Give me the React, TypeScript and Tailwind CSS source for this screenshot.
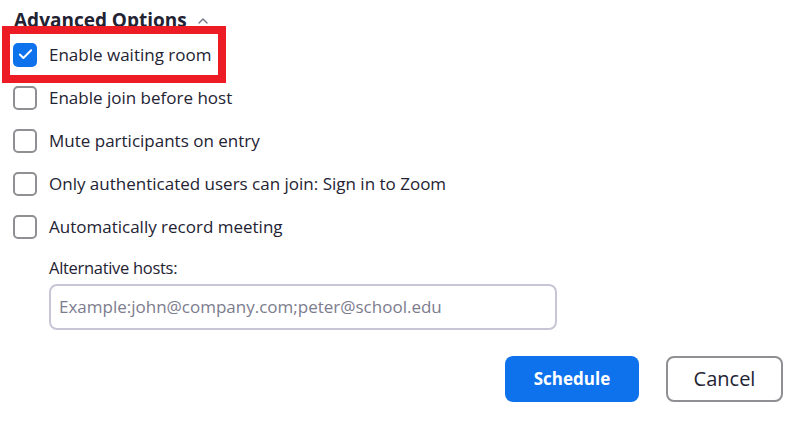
import { Check, ChevronUp } from 'lucide-react'

const options = [
  { label: 'Enable waiting room', checked: true },
  { label: 'Enable join before host', checked: false },
  { label: 'Mute participants on entry', checked: false },
  { label: 'Only authenticated users can join: Sign in to Zoom', checked: false },
  { label: 'Automatically record meeting', checked: false },
]

function Box({ checked }: { checked: boolean }) {
  if (checked) {
    return (
      <span className="flex size-6 shrink-0 items-center justify-center rounded-[5px] bg-[#0e72ed]">
        <Check className="size-[17px] text-white" strokeWidth={2.75} />
      </span>
    )
  }
  return <span className="size-6 shrink-0 rounded-[5px] border-2 border-[#8f8f94] bg-white" />
}

export default function App() {
  return (
    <div className="relative h-[421px] w-[810px] overflow-hidden bg-white font-['Open_Sans',sans-serif] text-[#232333]">
      <div className="mt-[4px] flex items-center gap-2 pl-[14px]">
        <h2 className="text-[19px] font-bold leading-[32px]">Advanced Options</h2>
        <ChevronUp className="mt-[2px] size-4 text-[#747487]" strokeWidth={2} />
      </div>

      <div className="-mt-[3px] flex flex-col">
        {options.map((o) => (
          <label key={o.label} className="flex h-[43px] items-center gap-3 pl-[13px]">
            <Box checked={o.checked} />
            <span className="whitespace-nowrap text-[17px]">{o.label}</span>
          </label>
        ))}
      </div>

      <div className="mt-[9px] pl-[49px]">
        <div className="text-[16.5px] leading-[22px] tracking-[-0.3px]">Alternative hosts:</div>
        <div className="mt-[5px] flex h-[46px] w-[508px] items-center rounded-[8px] border-2 border-[#c7c6d6] px-[8px] text-[17px] text-[#7c7c8e]">
          Example:john@company.com;peter@school.edu
        </div>
      </div>

      <div className="mt-[26px] flex justify-end gap-[27px] pr-[27px]">
        <button className="h-[46px] w-[134px] rounded-[8px] bg-[#0e72ed] text-[17px] font-bold text-white">
          Schedule
        </button>
        <button className="h-[46px] w-[117px] rounded-[8px] border-2 border-[#8f8f94] bg-white text-[20px] text-[#232333]">
          Cancel
        </button>
      </div>

      {/* annotation highlight */}
      <div className="pointer-events-none absolute left-[2px] top-[26px] h-[57px] w-[224px] border-[8px] border-[#ed1c24]" />
    </div>
  )
}
